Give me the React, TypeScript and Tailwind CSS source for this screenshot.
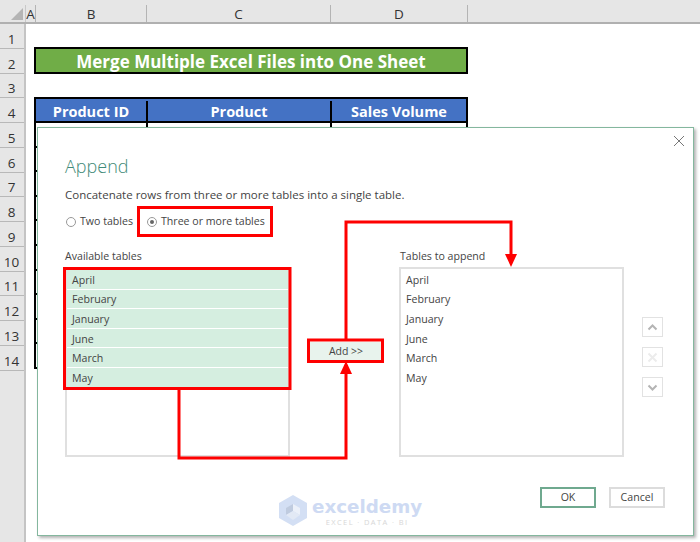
const rowNums = [1, 2, 3, 4, 5, 6, 7, 8, 9, 10, 11, 12, 13, 14];
const bodyRows = [5, 6, 7, 8, 9, 10, 11, 12, 13, 14];
const tables = ["April", "February", "January", "June", "March", "May"];

function ColHead({ label, className }: { label: string; className: string }) {
  return (
    <div className={`flex items-center justify-center border-r border-[#b4b4b4] pt-px text-[13.5px] text-[#333] ${className}`}>
      {label}
    </div>
  );
}

function Sheet() {
  return (
    <div className="absolute inset-0 flex flex-col bg-white">
      <div className="flex h-[24px] border-b-2 border-[#b0b0b0] bg-[#e6e6e6] pt-[5px]">
        <div className="relative w-[26px] border-r border-[#c8c8c8]">
          <div className="absolute bottom-[2px] right-[2px] h-0 w-0 border-b-[12px] border-l-[12px] border-b-[#b4b4b4] border-l-transparent" />
        </div>
        <ColHead label="A" className="w-[10px]" />
        <ColHead label="B" className="w-[111px]" />
        <ColHead label="C" className="w-[184px]" />
        <ColHead label="D" className="w-[137px]" />
      </div>
      <div className="flex flex-1">
        <div className="flex w-[26px] flex-col border-r-2 border-[#c4c4c4] bg-[#e6e6e6]">
          {rowNums.map((n) => (
            <div
              key={n}
              className="flex h-[24.75px] items-center justify-center border-b border-[#b8b8b8] pr-px pt-[6px] text-[13.5px] text-[#333]"
            >
              {n}
            </div>
          ))}
        </div>
        <div className="ml-[8px] w-[434px] pt-[23px]">
          <div className="flex h-[27px] items-center justify-center border-2 border-black bg-[#70ad47] pt-[2px] text-[17px] font-bold text-white">
            Merge Multiple Excel Files into One Sheet
          </div>
          <div className="h-[23px]" />
          <div className="grid h-[26px] grid-cols-[112px_184px_1fr] border-2 border-black bg-[#4472c4] pt-[2px] text-[14.5px] font-bold text-white">
            <div className="flex items-center justify-center border-r-2 border-black">Product ID</div>
            <div className="flex items-center justify-center border-r-2 border-black">Product</div>
            <div className="flex items-center justify-center">Sales Volume</div>
          </div>
          {bodyRows.map((n) => (
            <div
              key={n}
              className="grid h-[24.6px] grid-cols-[112px_184px_1fr] border-x-2 border-b-2 border-black"
            >
              <div className="border-r-2 border-black" />
              <div className="border-r-2 border-black" />
              <div />
            </div>
          ))}
        </div>
      </div>
    </div>
  );
}

function ListBox({ selected }: { selected?: boolean }) {
  return (
    <div className="h-[190px] border-2 border-[#e0e0e0] bg-white pt-px">
      {tables.map((t) => (
        <div
          key={t}
          className={`mb-px flex h-[18.6px] items-center px-[5px] pt-[3px] text-[10.6px] text-[#444] ${selected ? "bg-[#d5eee0]" : ""}`}
        >
          {t}
        </div>
      ))}
    </div>
  );
}

function ArrowButton({ path, light }: { path: string; light?: boolean }) {
  return (
    <div className="flex h-[20px] w-[21px] items-center justify-center border border-[#e2e2e2]">
      <svg width="11" height="11" viewBox="0 0 11 11" fill="none">
        <path d={path} stroke={light ? "#ececec" : "#b4b4b4"} strokeWidth="2" />
      </svg>
    </div>
  );
}

function Dialog() {
  return (
    <div className="absolute left-[37px] top-[127px] h-[409px] w-[657px] border border-[#84b79e] bg-white pl-[27px] pt-[26px] text-[#444] shadow-[2px_2px_3px_rgba(0,0,0,0.3)]">
      <button className="absolute right-[8px] top-[7px] text-[#777]">
        <svg width="12" height="12" viewBox="0 0 12 12" fill="none">
          <path d="M1 1l10 10M11 1L1 11" stroke="currentColor" strokeWidth="1" />
        </svg>
      </button>
      <h1 className="text-[18px] font-light leading-[24px] text-[#3f8a78]">Append</h1>
      <p className="mt-[9px] text-[11.5px] leading-[16px]">
        Concatenate rows from three or more tables into a single table.
      </p>
      <div className="mt-[9px] flex h-[20px] items-center text-[10.6px]">
        <span className="ml-px h-[10px] w-[10px] rounded-full border border-[#999]" />
        <span className="ml-[4px] w-[52px] whitespace-nowrap">Two tables</span>
        <span className="ml-[15px] flex h-[10px] w-[10px] items-center justify-center rounded-full border border-[#999]">
          <span className="h-[4px] w-[4px] rounded-full bg-[#666]" />
        </span>
        <span className="ml-[4px] whitespace-nowrap">Three or more tables</span>
      </div>
      <div className="mt-[16px] flex">
        <div className="w-[225px]">
          <div className="text-[10.6px] leading-[16px]">Available tables</div>
          <div className="mt-[3px]">
            <ListBox selected />
          </div>
        </div>
        <div className="ml-[20px] w-[72px] pt-[89px]">
          <button className="h-[20px] w-full bg-[#e8f3ed] text-[10.5px] text-[#444]">Add &gt;&gt;</button>
        </div>
        <div className="ml-[17px] w-[225px]">
          <div className="pl-px text-[10.6px] leading-[16px]">Tables to append</div>
          <div className="mt-[3px]">
            <ListBox />
          </div>
        </div>
        <div className="ml-[18px] flex flex-col gap-[10px] pt-[69px]">
          <ArrowButton path="M1.5 7.5l4-4 4 4" />
          <ArrowButton path="M1.5 1.5l8 8M9.5 1.5l-8 8" light />
          <ArrowButton path="M1.5 3.5l4 4 4-4" />
        </div>
      </div>
      <div className="absolute right-[28px] top-[359px] flex gap-[13px] text-[10.6px]">
        <button className="h-[21px] w-[56px] border-2 border-[#6fa98f]">OK</button>
        <button className="h-[21px] w-[56px] border-2 border-[#dcdcdc]">Cancel</button>
      </div>
      <div className="absolute left-[241px] top-[367px] flex items-start opacity-90">
        <svg width="28" height="31" viewBox="0 0 28 31">
          <path d="M14 0L28 8v15l-14 8L0 23V8z" fill="#cfdcf3" />
          <path d="M14 9l7 4v7l-7-4z" fill="#e9eff9" />
          <path d="M14 9l-7 4v7l7-4z" fill="#b9c6dc" />
          <path d="M7 20l7-4 7 4-7 5z" fill="#dfe7f5" />
        </svg>
        <div className="ml-[5px] flex flex-col items-center">
          <span className="text-[18.3px] font-bold leading-[23px] text-[#c9d7f2] [font-family:'DejaVu_Sans',sans-serif]">
            exceldemy
          </span>
          <span className="text-[7.5px] leading-[9px] tracking-[1.4px] text-[#d4d4d4]">EXCEL · DATA · BI</span>
        </div>
      </div>
    </div>
  );
}

function Annotations() {
  return (
    <svg className="pointer-events-none absolute inset-0" width="700" height="542" fill="none">
      <g stroke="#fe0000" strokeWidth="3">
        <rect x="138.5" y="207.5" width="133" height="28" />
        <rect x="64.5" y="268.5" width="225.5" height="120" />
        <rect x="308.5" y="340" width="74" height="21.5" />
        <path d="M179 389v69h167v-85" />
        <path d="M346 340V222h165v34" />
      </g>
      <path d="M346 361l-6 13h12z" fill="#fe0000" />
      <path d="M511 267l-6-13h12z" fill="#fe0000" />
    </svg>
  );
}

export default function App() {
  return (
    <div className="relative h-[542px] w-[700px] overflow-hidden [font-family:'Open_Sans',sans-serif]">
      <Sheet />
      <Dialog />
      <Annotations />
    </div>
  );
}
